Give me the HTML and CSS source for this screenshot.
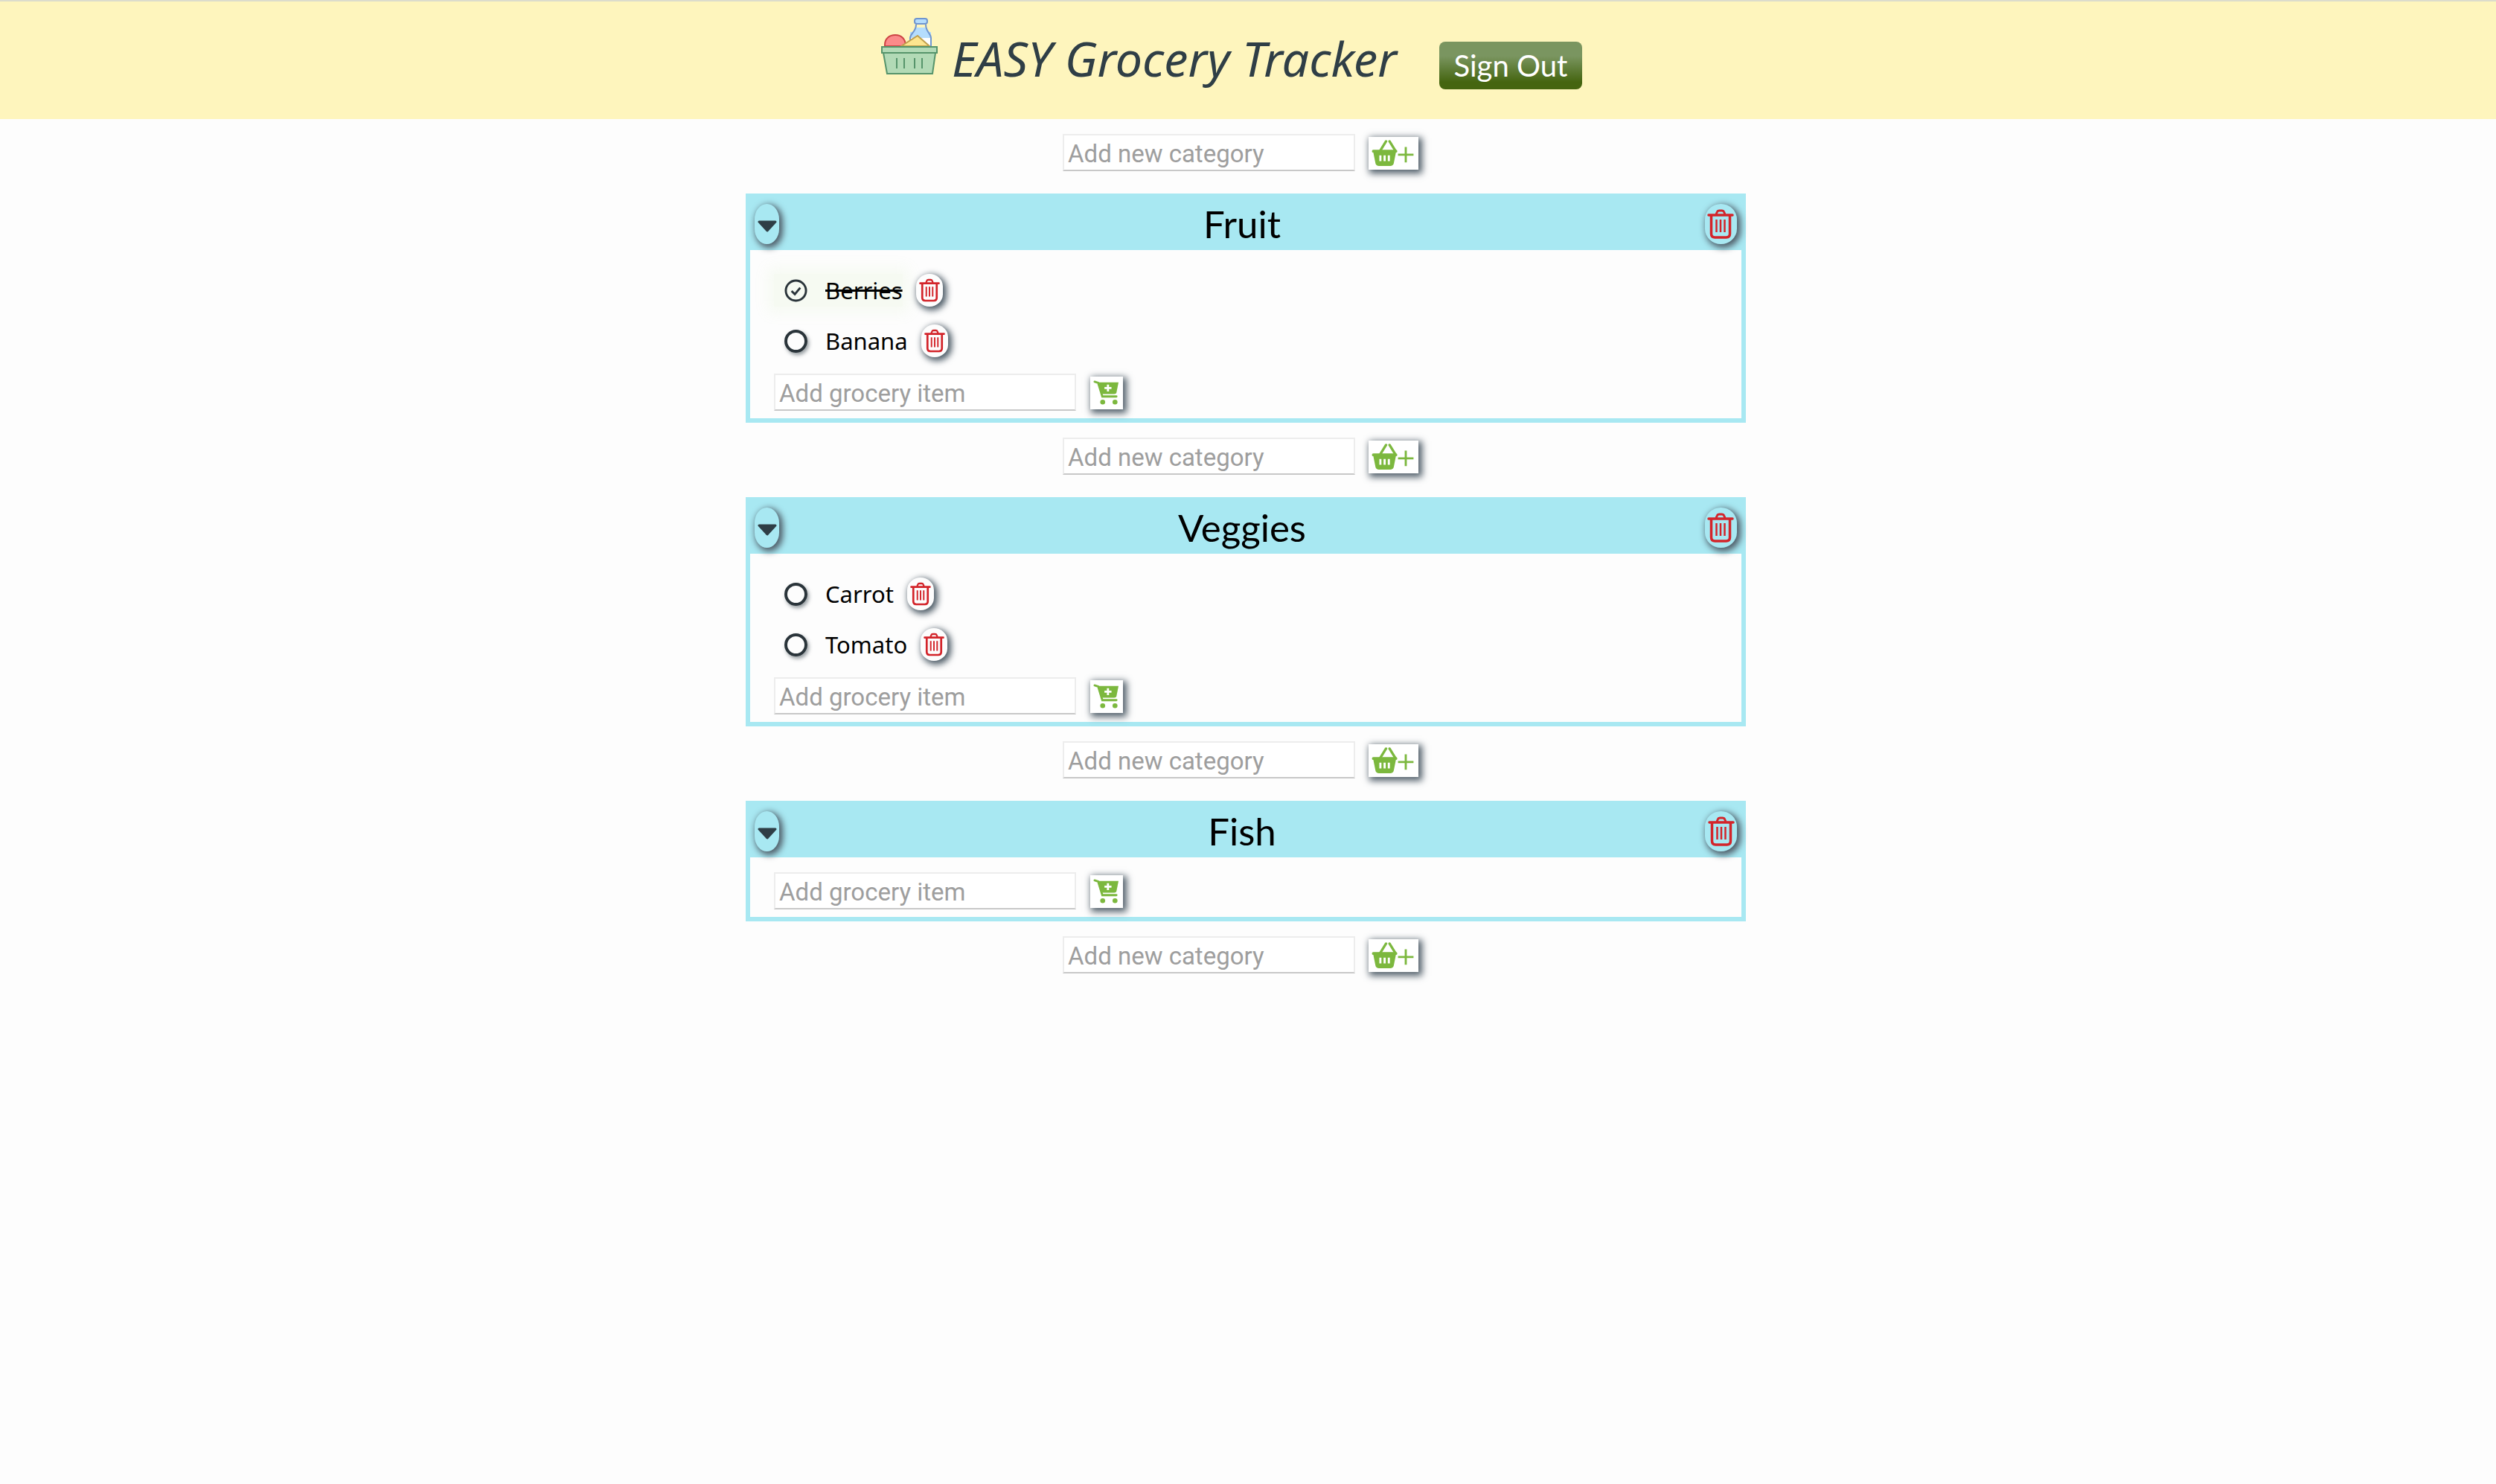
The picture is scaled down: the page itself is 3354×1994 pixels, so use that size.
FILE: index.html
```html
<!DOCTYPE html>
<html lang="en">
<head>
    <meta charset="UTF-8">
    <title>EASY Grocery Tracker</title>
    <link rel="stylesheet" href="styles.css">
</head>
<body>
    <svg class="sprites" width="0" height="0">
        <symbol id="trash" viewBox="0 0 36 40">
            <path d="M12 7 L13.5 3.5 Q14 2 16 2 H20 Q22 2 22.500 3.500 L24 7" fill="none" stroke="currentColor" stroke-width="3"/>
            <path d="M2 8 H34" fill="none" stroke="currentColor" stroke-width="3.500" stroke-linecap="round"/>
            <path d="M5.500 9 V33 Q5.500 38 10.500 38 H25.500 Q30.500 38 30.500 33 V9" fill="none" stroke="currentColor" stroke-width="3.500"/>
            <path d="M12.500 14 V31 M18 14 V31 M23.500 14 V31" fill="none" stroke="currentColor" stroke-width="2.500"/>
        </symbol>
        <symbol id="basket-plus" viewBox="0 0 60 38">
            <path d="M13 15 L21 2 M26 2 L34 15" fill="none" stroke="currentColor" stroke-width="3.500" stroke-linecap="round"/>
            <path d="M1 16 Q1 14 3 14 H35 Q37 14 37 16 Q37 18 35 18 L32 33 Q31 37 27 37 H11 Q7 37 6 33 L3 18 Q1 18 1 16 Z" fill="currentColor"/>
            <path d="M13 22 V30 M19 22 V30 M25 22 V30" stroke="#fff" stroke-width="3"/>
            <path d="M38 21 H60 M49 10 V32" stroke="currentColor" stroke-width="3"/>
        </symbol>
        <symbol id="cart-plus" viewBox="0 0 36 36">
            <path d="M2 2 L7 3.500 L13 23 H33" fill="none" stroke="currentColor" stroke-width="3" stroke-linecap="round"/>
            <path d="M7.500 3 H36 L33 18 Q32.500 19.500 30 19.500 H12 Z" fill="currentColor"/>
            <path d="M21 6 V16 M16 11 H26" stroke="#fff" stroke-width="3"/>
            <circle cx="13.500" cy="31" r="3.500" fill="currentColor"/>
            <circle cx="31" cy="31" r="3.500" fill="currentColor"/>
        </symbol>
        <symbol id="arrow" viewBox="0 0 26 16">
            <path d="M2 2 H24 L13 14 Z" fill="currentColor" stroke="currentColor" stroke-width="3" stroke-linejoin="round"/>
        </symbol>
    </svg>

    <header class="topbar">
        <svg class="logo" viewBox="0 0 76 76">
            <path d="M39 38 V27 C39 21 47 19 47 13 H60 C60 19 67 21 67 27 V38 Z" fill="#fff"/>
            <path d="M39 19 V27 H67 V19 Z M42 19 C45 17 47 15 47 13 H60 C60 15 62 17 65 19 Z" fill="#b5ddfd"/>
            <path d="M39 38 V27 C39 21 47 19 47 9 M60 9 C60 19 67 21 67 27 V38" fill="none" stroke="#6f95cf" stroke-width="2"/>
            <rect x="45" y="1" width="17" height="7" rx="3" fill="#b5ddfd" stroke="#6f95cf" stroke-width="2"/>
            <path d="M5 38 V36 C5 28 11 23 19 23 C27 23 33 28 33 38 Z" fill="#fb8a8a" stroke="#cc4444" stroke-width="2"/>
            <path d="M27 38 L49 24 L65 38 Z" fill="#fde58f" stroke="#bf9f4c" stroke-width="2"/>
            <path d="M3 47 L8 75 H69 L73 47 Z" fill="#b2dab6" stroke="#56946b" stroke-width="2"/>
            <rect x="1" y="39" width="74" height="8" fill="#b2dab6" stroke="#56946b" stroke-width="2"/>
            <path d="M21 54 V68 M31 54 V68 M45 54 V68 M55 54 V68" stroke="#56946b" stroke-width="2"/>
        </svg>
        <h1 class="app-title">EASY Grocery Tracker</h1>
        <button class="sign-out" type="button">Sign Out</button>
    </header>

    <main class="board">
        <form class="add-category">
            <input class="text-field category-field" type="text" placeholder="Add new category">
            <button class="add-btn category-btn" type="button"><svg class="basket-icon"><use href="#basket-plus"/></svg></button>
        </form>

        <section class="category">
            <div class="category-head">
                <button class="collapse-btn" type="button"><svg class="arrow-icon"><use href="#arrow"/></svg></button>
                <h2 class="category-name">Fruit</h2>
                <button class="head-delete" type="button"><svg class="trash-icon"><use href="#trash"/></svg></button>
            </div>
            <div class="category-body">
                <ul class="items">
                    <li class="item">
                        <div class="item-main done">
                            <svg class="check" viewBox="0 0 32 32"><circle cx="16" cy="16" r="14" fill="none" stroke="#2a343a" stroke-width="3"/><path d="M10 16.500 L14.500 21 L22 12" fill="none" stroke="#2a343a" stroke-width="3"/></svg>
                            <span class="item-name">Berries</span>
                        </div>
                        <button class="item-delete" type="button"><svg class="trash-icon"><use href="#trash"/></svg></button>
                    </li>
                    <li class="item">
                        <div class="item-main">
                            <span class="radio"></span>
                            <span class="item-name">Banana</span>
                        </div>
                        <button class="item-delete" type="button"><svg class="trash-icon"><use href="#trash"/></svg></button>
                    </li>
                </ul>
                <form class="add-item">
                    <input class="text-field item-field" type="text" placeholder="Add grocery item">
                    <button class="add-btn item-btn" type="button"><svg class="cart-icon"><use href="#cart-plus"/></svg></button>
                </form>
            </div>
        </section>

        <form class="add-category">
            <input class="text-field category-field" type="text" placeholder="Add new category">
            <button class="add-btn category-btn" type="button"><svg class="basket-icon"><use href="#basket-plus"/></svg></button>
        </form>

        <section class="category">
            <div class="category-head">
                <button class="collapse-btn" type="button"><svg class="arrow-icon"><use href="#arrow"/></svg></button>
                <h2 class="category-name">Veggies</h2>
                <button class="head-delete" type="button"><svg class="trash-icon"><use href="#trash"/></svg></button>
            </div>
            <div class="category-body">
                <ul class="items">
                    <li class="item">
                        <div class="item-main">
                            <span class="radio"></span>
                            <span class="item-name">Carrot</span>
                        </div>
                        <button class="item-delete" type="button"><svg class="trash-icon"><use href="#trash"/></svg></button>
                    </li>
                    <li class="item">
                        <div class="item-main">
                            <span class="radio"></span>
                            <span class="item-name">Tomato</span>
                        </div>
                        <button class="item-delete" type="button"><svg class="trash-icon"><use href="#trash"/></svg></button>
                    </li>
                </ul>
                <form class="add-item">
                    <input class="text-field item-field" type="text" placeholder="Add grocery item">
                    <button class="add-btn item-btn" type="button"><svg class="cart-icon"><use href="#cart-plus"/></svg></button>
                </form>
            </div>
        </section>

        <form class="add-category">
            <input class="text-field category-field" type="text" placeholder="Add new category">
            <button class="add-btn category-btn" type="button"><svg class="basket-icon"><use href="#basket-plus"/></svg></button>
        </form>

        <section class="category">
            <div class="category-head">
                <button class="collapse-btn" type="button"><svg class="arrow-icon"><use href="#arrow"/></svg></button>
                <h2 class="category-name">Fish</h2>
                <button class="head-delete" type="button"><svg class="trash-icon"><use href="#trash"/></svg></button>
            </div>
            <div class="category-body">
                <form class="add-item">
                    <input class="text-field item-field" type="text" placeholder="Add grocery item">
                    <button class="add-btn item-btn" type="button"><svg class="cart-icon"><use href="#cart-plus"/></svg></button>
                </form>
            </div>
        </section>

        <form class="add-category">
            <input class="text-field category-field" type="text" placeholder="Add new category">
            <button class="add-btn category-btn" type="button"><svg class="basket-icon"><use href="#basket-plus"/></svg></button>
        </form>
    </main>
</body>
</html>
```

FILE: styles.css
```css
body {
    margin: 0;
    min-height: 1994px;
    box-sizing: border-box;
    background-color: #fdfdfd;
    font-family: 'Open Sans', sans-serif;
}

button {
    padding: 0;
    border: none;
    cursor: pointer;
}

.sprites {
    position: absolute;
}

.topbar {
    display: flex;
    align-items: flex-start;
    height: 160px;
    box-sizing: border-box;
    padding: 0 44px 0 0;
    justify-content: center;
    background-color: #fef5bd;
    border-top: 2px solid #dcdccc;
}

.logo {
    width: 76px;
    height: 76px;
    margin-top: 22px;
}

.app-title {
    margin: 36px 0 0 19px;
    font-family: 'Noto Sans', sans-serif;
    font-size: 64.5px;
    font-style: italic;
    font-weight: 400;
    line-height: 80px;
    color: #2f3e46;
}

.sign-out {
    width: 192px;
    height: 64px;
    margin: 54px 0 0 57px;
    border-radius: 8px;
    background: linear-gradient(#7a9560 0%, #7a9560 30%, #456510 85%);
    font-family: 'Lato', sans-serif;
    font-size: 40px;
    color: #fff;
}

.board {
    display: flex;
    flex-direction: column;
    width: 1344px;
    margin-left: 1002px;
}

.add-category {
    display: flex;
    align-items: center;
    justify-content: center;
    height: 100px;
    box-sizing: border-box;
    padding: 0 14px 10px 0;
}

.text-field {
    height: 50px;
    box-sizing: border-box;
    padding: 2px 5px 0;
    border: 2px solid #ededed;
    border-bottom-color: #c8c8c8;
    background-color: #fff;
    font-family: 'Roboto', sans-serif;
    font-size: 33px;
}

.text-field::placeholder {
    color: #9e9e9e;
}

.category-field {
    width: 393px;
}

.item-field {
    width: 406px;
}

.add-btn {
    display: flex;
    align-items: center;
    justify-content: center;
    background-color: #fff;
    box-shadow: 3px 3px 9px 2px #4f5d68;
    color: #7cb83e;
}

.category-btn {
    width: 67px;
    height: 44px;
    margin: 2px 0 0 18px;
}

.basket-icon {
    width: 58px;
    height: 36px;
    margin-right: 3px;
}

.item-btn {
    width: 44px;
    height: 44px;
    margin: 2px 0 0 19px;
}

.cart-icon {
    width: 34px;
    height: 36px;
    margin-right: 2px;
}

.category {
    border: 6px solid #a8e8f2;
}

.category-head {
    display: flex;
    align-items: center;
    justify-content: space-between;
    height: 70px;
    padding: 0 6px;
    background-color: #a8e8f2;
}

.category-name {
    margin: 0 0 2px;
    font-family: 'Lato', sans-serif;
    font-size: 51px;
    font-weight: 400;
    color: #000;
}

.collapse-btn, .head-delete {
    display: flex;
    align-items: center;
    justify-content: center;
    height: 54px;
    border-radius: 50% / 38%;
    background-color: #a8e8f2;
    box-shadow: 3px 3px 9px 2px #4f5d68;
}

.collapse-btn {
    width: 33px;
    color: #2f3e46;
}

.arrow-icon {
    width: 26px;
    height: 16px;
    margin-top: 5px;
}

.head-delete {
    width: 43px;
    color: #d3242a;
}

.head-delete .trash-icon {
    width: 36px;
    height: 40px;
}

.category-body {
    padding: 20px 32px 10px;
}

.items {
    margin: 0 0 10px;
    padding: 0;
    list-style: none;
}

.item {
    display: flex;
    align-items: center;
    height: 68px;
}

.item-main {
    display: flex;
    align-items: center;
    padding-left: 14px;
    height: 44px;
}

.item-main.done {
    background-color: rgba(190, 230, 150, 0.1);
    box-shadow: 0 0 18px 8px rgba(190, 230, 150, 0.1);
}

.radio {
    width: 31px;
    height: 31px;
    box-sizing: border-box;
    border: 4px solid #2a343a;
    border-radius: 50%;
    box-shadow: 2px 3px 5px rgba(47, 62, 70, 0.5);
}

.check {
    width: 31px;
    height: 31px;
}

.item-name {
    margin-left: 24px;
    font-family: 'Noto Sans', sans-serif;
    font-size: 31px;
    color: #000;
}

.done .item-name {
    text-decoration: line-through;
}

.item-delete {
    display: flex;
    align-items: center;
    justify-content: center;
    width: 36px;
    height: 44px;
    margin-left: 18px;
    border-radius: 50% / 38%;
    background-color: #fdfdfd;
    box-shadow: 3px 3px 9px 2px #4f5d68;
    color: #d3242a;
}

.item-delete .trash-icon {
    width: 28px;
    height: 34px;
}

.add-item {
    display: flex;
    align-items: center;
}
```
